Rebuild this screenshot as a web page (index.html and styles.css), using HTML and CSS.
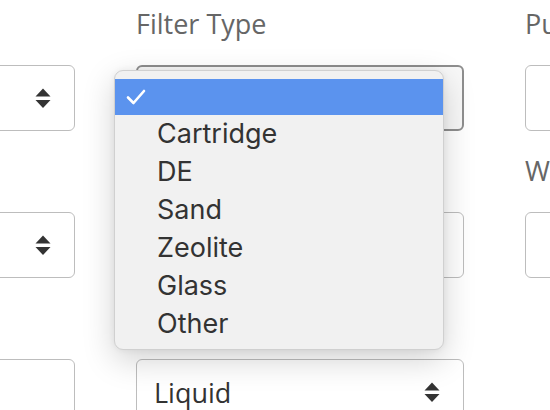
FILE: index.html
```html
<!DOCTYPE html>
<html>
<head>
<meta charset="utf-8">
<link rel="stylesheet" href="styles.css">
</head>
<body>
<div class="page">
  <div class="grid">
    <div class="col">
      <div class="field">
        <label class="label"></label>
        <div class="select"><span class="value"></span>
          <svg class="arrows" width="16" height="20" viewBox="0 0 16 20"><path d="M0.5 8.5 L8 0.5 L15.5 8.5 Z M0.5 12 L15.5 12 L8 20 Z" fill="#333"/></svg>
        </div>
      </div>
      <div class="field">
        <label class="label"></label>
        <div class="select"><span class="value"></span>
          <svg class="arrows" width="16" height="20" viewBox="0 0 16 20"><path d="M0.5 8.5 L8 0.5 L15.5 8.5 Z M0.5 12 L15.5 12 L8 20 Z" fill="#333"/></svg>
        </div>
      </div>
      <div class="field">
        <label class="label"></label>
        <div class="input"></div>
      </div>
    </div>
    <div class="col">
      <div class="field">
        <label class="label">Filter Type</label>
        <div class="select focused"><span class="value"></span></div>
      </div>
      <div class="field">
        <label class="label"></label>
        <div class="select"><span class="value"></span></div>
      </div>
      <div class="field">
        <label class="label"></label>
        <div class="select"><span class="value">Liquid</span>
          <svg class="arrows" width="16" height="20" viewBox="0 0 16 20"><path d="M0.5 8.5 L8 0.5 L15.5 8.5 Z M0.5 12 L15.5 12 L8 20 Z" fill="#333"/></svg>
        </div>
      </div>
    </div>
    <div class="col">
      <div class="field">
        <label class="label">Pump Size</label>
        <div class="input"></div>
      </div>
      <div class="field">
        <label class="label">Width</label>
        <div class="input"></div>
      </div>
    </div>
  </div>

  <div class="menu">
    <div class="item selected">
      <svg class="check" width="20" height="16" viewBox="0 0 20 16"><path d="M2 8.5 L7.5 14 L18 2" fill="none" stroke="#fff" stroke-width="2.6" stroke-linecap="round" stroke-linejoin="round"/></svg>
    </div>
    <div class="item">Cartridge</div>
    <div class="item">DE</div>
    <div class="item">Sand</div>
    <div class="item">Zeolite</div>
    <div class="item">Glass</div>
    <div class="item">Other</div>
  </div>
</div>
</body>
</html>
```

FILE: styles.css
```css
html, body {
  margin: 0;
  padding: 0;
  background: #ffffff;
  overflow: hidden;
}

.page {
  position: relative;
  width: 550px;
  height: 410px;
  overflow: hidden;
}

.grid {
  display: grid;
  grid-template-columns: 328px 328px 328px;
  column-gap: 61px;
  margin-left: -253px;
  font-family: "Open Sans", "Noto Sans", sans-serif;
}

.col {
  display: flex;
  flex-direction: column;
}

.field {
  display: flex;
  flex-direction: column;
  height: 147px;
}

.label {
  display: block;
  height: 40px;
  line-height: 40px;
  margin-top: 4px;
  margin-bottom: 21px;
  font-size: 27px;
  color: #666;
  white-space: nowrap;
}

.select, .input {
  box-sizing: border-box;
  height: 66px;
  border: 1.5px solid #bdbdbd;
  border-radius: 6px;
  background: #fff;
  display: flex;
  align-items: center;
  justify-content: space-between;
  padding: 0 23px 0 17px;
}

.select.focused {
  border: 2px solid #8e8e8e;
  background: #f8f8f8;
}

.value {
  font-size: 27px;
  color: #333;
}

.arrows {
  display: block;
}

.menu {
  position: absolute;
  left: 114px;
  top: 70px;
  width: 330px;
  box-sizing: border-box;
  padding: 8px 0 6px;
  background: #f1f1f1;
  border: 1px solid #d0d0d0;
  border-radius: 9px;
  box-shadow: 0 10px 32px rgba(0, 0, 0, 0.18), 0 0 6px rgba(0, 0, 0, 0.06);
  font-family: Inter, "Liberation Sans", sans-serif;
}

.item {
  height: 38px;
  line-height: 38px;
  padding-left: 42px;
  font-size: 27px;
  color: #333;
  display: flex;
  align-items: center;
}

.item.selected {
  background: #5b93ee;
  height: 36px;
  padding-left: 11px;
}
```
